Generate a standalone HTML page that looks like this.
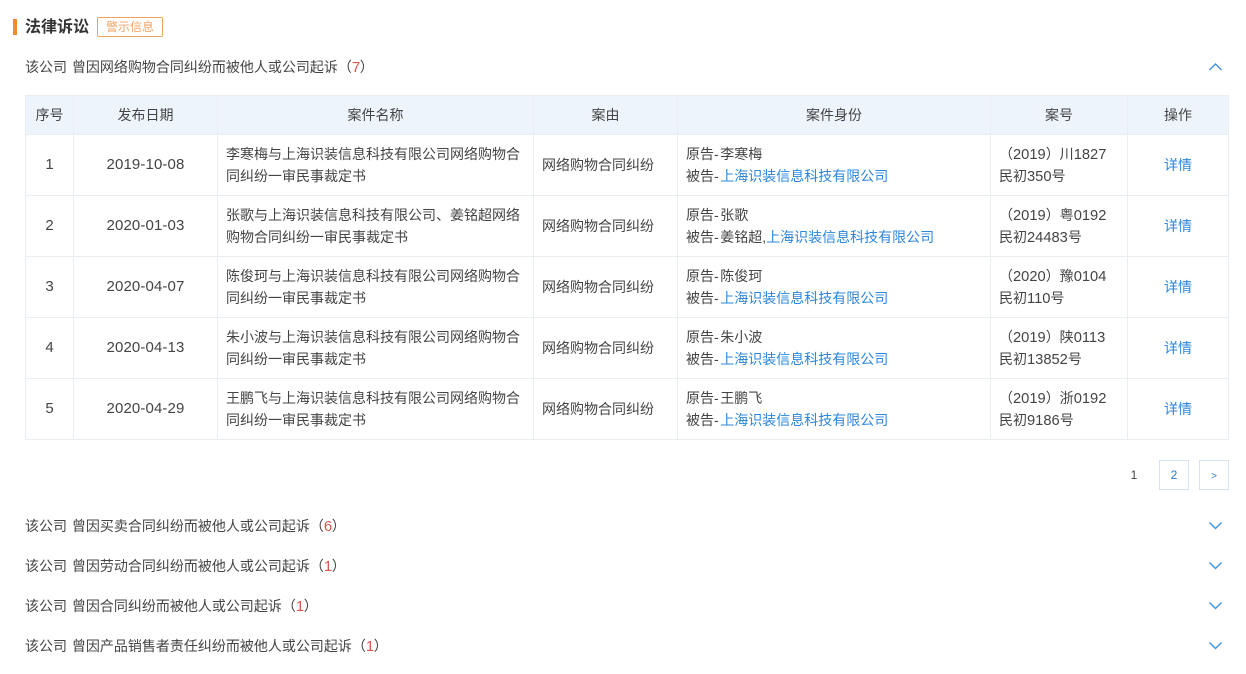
<!DOCTYPE html>
<html lang="zh-CN">
<head>
<meta charset="utf-8">
<title>法律诉讼</title>
<style>
html,body{margin:0;padding:0;background:#fff}
body{width:1246px;height:674px;position:relative;overflow:hidden;font:14px/22px "Liberation Sans","Noto Sans CJK SC",sans-serif;color:#444}
.bar{position:absolute;left:13px;top:19px;width:4px;height:16px;background:#f58a2c}
.title{position:absolute;left:25px;top:17px;font-size:16px;font-weight:700;line-height:22px;color:#333}
.tag{position:absolute;left:97px;top:17px;width:64px;height:18px;border:1px solid #f0a35e;border-radius:2px;font-size:12px;line-height:18px;text-align:center;color:#f2a566}
.line{position:absolute;left:25px;white-space:nowrap;color:#444;word-spacing:1px}
.line i{font-style:normal;font-size:15px;color:#d9544c;margin:0 -.5px 0 0}
.chev{position:absolute;left:1208px;width:15px;height:9px}
table{position:absolute;left:25px;top:95px;width:1203px;border-collapse:collapse;table-layout:fixed;color:#444}
td,th{border:1px solid #e9eef3;padding:0 8px;font-weight:400;vertical-align:middle;line-height:22px}
th{height:38px;background:#edf4fb;text-align:center;color:#444}
td{height:60px}
.c{text-align:center}
.d{font-size:15px;letter-spacing:.12px}
.i{font-size:15px}
.n{font-size:14.7px;line-height:20px}
.h{letter-spacing:1.6px}
a{color:#2b86dc;text-decoration:none}
.pg{position:absolute;top:460px;width:28px;height:28px;border:1px solid #d6e3f0;text-align:center;font-size:12px;line-height:28px;color:#2b7bc9}
.cur{position:absolute;left:1119px;top:460px;width:30px;height:30px;text-align:center;font-size:12px;line-height:30px;color:#444}
</style>
</head>
<body>
<div class="bar"></div>
<div class="title">法律诉讼</div>
<div class="tag">警示信息</div>

<div class="line" style="top:56px">该公司 曾因网络购物合同纠纷而被他人或公司起诉（<i>7</i>）</div>
<svg class="chev" style="top:62px" viewBox="0 0 15 9"><path d="M1.5 8L7.5 2l6 6" fill="none" stroke="#3f8fd8" stroke-width="1.4"/></svg>

<table>
<colgroup><col style="width:48px"><col style="width:144px"><col style="width:316px"><col style="width:144px"><col style="width:313px"><col style="width:137px"><col style="width:101px"></colgroup>
<tr><th>序号</th><th>发布日期</th><th>案件名称</th><th>案由</th><th>案件身份</th><th>案号</th><th>操作</th></tr>
<tr><td class="c i">1</td><td class="c d">2019-10-08</td><td>李寒梅与上海识装信息科技有限公司网络购物合<br>同纠纷一审民事裁定书</td><td>网络购物合同纠纷</td><td>原告<span class="h">-</span>李寒梅<br>被告<span class="h">-</span><a>上海识装信息科技有限公司</a></td><td>（<span class="n">2019</span>）川<span class="n">1827</span><br>民初<span class="n">350</span>号</td><td class="c"><a>详情</a></td></tr>
<tr><td class="c i">2</td><td class="c d">2020-01-03</td><td>张歌与上海识装信息科技有限公司、姜铭超网络<br>购物合同纠纷一审民事裁定书</td><td>网络购物合同纠纷</td><td>原告<span class="h">-</span>张歌<br>被告<span class="h">-</span>姜铭超,<a>上海识装信息科技有限公司</a></td><td>（<span class="n">2019</span>）粤<span class="n">0192</span><br>民初<span class="n">24483</span>号</td><td class="c"><a>详情</a></td></tr>
<tr><td class="c i">3</td><td class="c d">2020-04-07</td><td>陈俊珂与上海识装信息科技有限公司网络购物合<br>同纠纷一审民事裁定书</td><td>网络购物合同纠纷</td><td>原告<span class="h">-</span>陈俊珂<br>被告<span class="h">-</span><a>上海识装信息科技有限公司</a></td><td>（<span class="n">2020</span>）豫<span class="n">0104</span><br>民初<span class="n">110</span>号</td><td class="c"><a>详情</a></td></tr>
<tr><td class="c i">4</td><td class="c d">2020-04-13</td><td>朱小波与上海识装信息科技有限公司网络购物合<br>同纠纷一审民事裁定书</td><td>网络购物合同纠纷</td><td>原告<span class="h">-</span>朱小波<br>被告<span class="h">-</span><a>上海识装信息科技有限公司</a></td><td>（<span class="n">2019</span>）陕<span class="n">0113</span><br>民初<span class="n">13852</span>号</td><td class="c"><a>详情</a></td></tr>
<tr><td class="c i">5</td><td class="c d">2020-04-29</td><td>王鹏飞与上海识装信息科技有限公司网络购物合<br>同纠纷一审民事裁定书</td><td>网络购物合同纠纷</td><td>原告<span class="h">-</span>王鹏飞<br>被告<span class="h">-</span><a>上海识装信息科技有限公司</a></td><td>（<span class="n">2019</span>）浙<span class="n">0192</span><br>民初<span class="n">9186</span>号</td><td class="c"><a>详情</a></td></tr>
</table>

<div class="cur">1</div>
<div class="pg" style="left:1159px">2</div>
<div class="pg" style="left:1199px;font-size:10px;line-height:32px">&gt;</div>

<div class="line" style="top:515px">该公司 曾因买卖合同纠纷而被他人或公司起诉（<i>6</i>）</div>
<svg class="chev" style="top:521px" viewBox="0 0 15 9"><path d="M1.5 1.5l6 6 6-6" fill="none" stroke="#3f8fd8" stroke-width="1.4"/></svg>
<div class="line" style="top:555px">该公司 曾因劳动合同纠纷而被他人或公司起诉（<i>1</i>）</div>
<svg class="chev" style="top:561px" viewBox="0 0 15 9"><path d="M1.5 1.5l6 6 6-6" fill="none" stroke="#3f8fd8" stroke-width="1.4"/></svg>
<div class="line" style="top:595px">该公司 曾因合同纠纷而被他人或公司起诉（<i>1</i>）</div>
<svg class="chev" style="top:601px" viewBox="0 0 15 9"><path d="M1.5 1.5l6 6 6-6" fill="none" stroke="#3f8fd8" stroke-width="1.4"/></svg>
<div class="line" style="top:635px">该公司 曾因产品销售者责任纠纷而被他人或公司起诉（<i>1</i>）</div>
<svg class="chev" style="top:641px" viewBox="0 0 15 9"><path d="M1.5 1.5l6 6 6-6" fill="none" stroke="#3f8fd8" stroke-width="1.4"/></svg>
</body>
</html>
